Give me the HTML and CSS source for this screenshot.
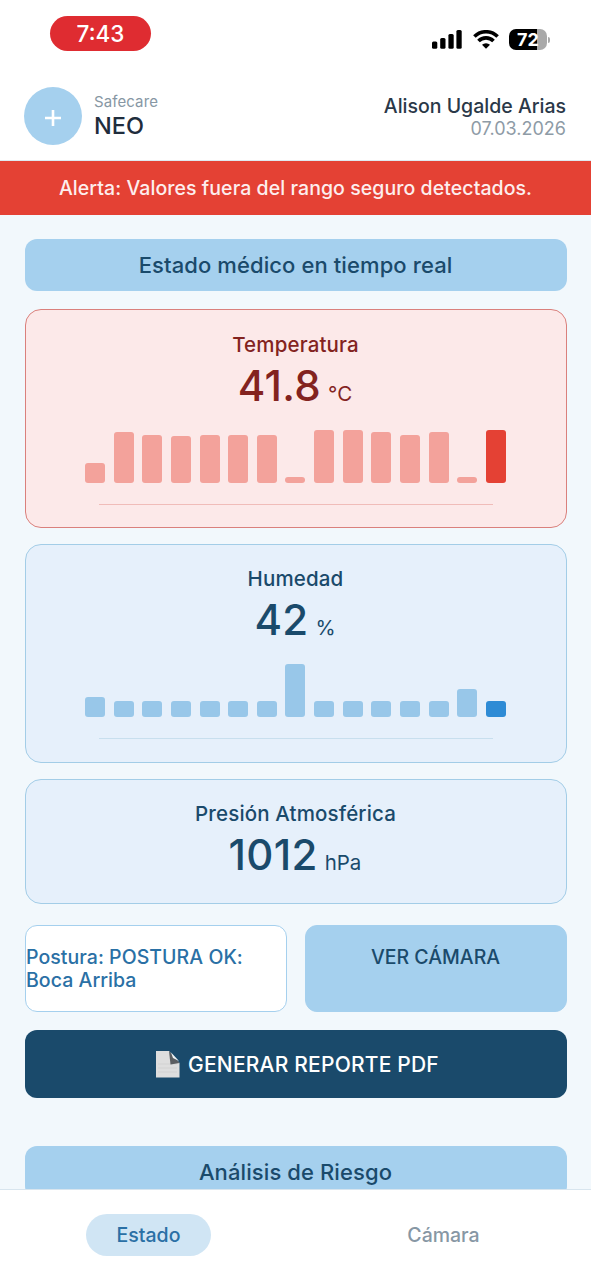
FILE: index.html
```html
<!DOCTYPE html>
<html lang="es">
<head>
    <meta charset="UTF-8">
    <meta name="viewport" content="width=device-width, initial-scale=1.0">
    <title>Safecare NEO</title>
    <link rel="stylesheet" href="styles.css">
</head>
<body>
    <div class="status-bar">
        <div class="clock">7:43</div>
        <div class="status-icons">
            <svg class="signal" width="30" height="19" viewBox="0 0 30 19">
                <rect x="0" y="11.5" width="5.3" height="7.2" rx="1.5"/>
                <rect x="8.2" y="8" width="5.3" height="10.7" rx="1.5"/>
                <rect x="16.4" y="4" width="5.3" height="14.7" rx="1.5"/>
                <rect x="24.4" y="0" width="5.3" height="18.7" rx="1.5"/>
            </svg>
            <svg class="wifi" width="26" height="19" viewBox="0 0 26 19">
                <path d="M1.4 6.5a16.5 16.5 0 0 1 23.2 0M5.5 11a10.5 10.5 0 0 1 15 0" fill="none" stroke="#000" stroke-width="3.6"/>
                <path d="M13 18.8l-4-4a5.7 5.7 0 0 1 8 0z"/>
            </svg>
            <div class="battery"><span>72</span></div>
        </div>
    </div>

    <header class="header">
        <div class="logo">
            <svg width="18" height="18" viewBox="0 0 18 18"><path d="M9 1v16M1 9h16" stroke="#fff" stroke-width="2.6"/></svg>
        </div>
        <div class="brand">
            <div class="brand-small">Safecare</div>
            <div class="brand-name">NEO</div>
        </div>
        <div class="patient">
            <div class="patient-name">Alison Ugalde Arias</div>
            <div class="patient-date">07.03.2026</div>
        </div>
    </header>

    <div class="alert">Alerta: Valores fuera del rango seguro detectados.</div>

    <main class="content">
        <h2 class="section-title">Estado médico en tiempo real</h2>

        <div class="card danger">
            <h3>Temperatura</h3>
            <div class="value"><span class="number">41.8</span><span class="unit">°C</span></div>
            <div class="chart">
                <i style="height:20px"></i>
                <i style="height:51px"></i>
                <i style="height:48px"></i>
                <i style="height:47px"></i>
                <i style="height:48px"></i>
                <i style="height:48px"></i>
                <i style="height:48px"></i>
                <i style="height:6px"></i>
                <i style="height:53.5px"></i>
                <i style="height:53.5px"></i>
                <i style="height:51px"></i>
                <i style="height:48px"></i>
                <i style="height:51px"></i>
                <i style="height:6px"></i>
                <i class="current" style="height:53.5px"></i>
            </div>
            <div class="axis"></div>
        </div>

        <div class="card">
            <h3>Humedad</h3>
            <div class="value"><span class="number">42</span><span class="unit">%</span></div>
            <div class="chart">
                <i style="height:20px"></i>
                <i style="height:16px"></i>
                <i style="height:16px"></i>
                <i style="height:16px"></i>
                <i style="height:16px"></i>
                <i style="height:16px"></i>
                <i style="height:16px"></i>
                <i style="height:53.5px"></i>
                <i style="height:16px"></i>
                <i style="height:16px"></i>
                <i style="height:16px"></i>
                <i style="height:16px"></i>
                <i style="height:16px"></i>
                <i style="height:28px"></i>
                <i class="current" style="height:16px"></i>
            </div>
            <div class="axis"></div>
        </div>

        <div class="card small">
            <h3>Presión Atmosférica</h3>
            <div class="value"><span class="number">1012</span><span class="unit">hPa</span></div>
        </div>

        <div class="actions">
            <div class="action posture">Postura: POSTURA OK: Boca Arriba</div>
            <div class="action camera">VER CÁMARA</div>
        </div>

        <div class="report">
            <svg width="24" height="27" viewBox="0 0 24 27">
                <path d="M0 0h13l10.500 12v14.500H0z" fill="#dedede"/>
                <path d="M2 13h19M2 17h19M2 21h19" stroke="#d2d2d2"/>
                <path d="M13 0l10.500 12-9 1.500z" fill="#5b5e61"/>
                <path d="M15 1.500l8 8.500-6-3z" fill="#f0f4f6"/>
            </svg>
            <span>GENERAR REPORTE PDF</span>
        </div>

        <h2 class="section-title risk">Análisis de Riesgo</h2>
    </main>

    <nav class="tabs">
        <div class="tab"><span class="active">Estado</span></div>
        <div class="tab"><span>Cámara</span></div>
    </nav>
</body>
</html>
```

FILE: styles.css
```css
* {
    margin: 0;
    padding: 0;
    box-sizing: border-box;
}

body {
    height: 1280px;
    display: flex;
    flex-direction: column;
    overflow: hidden;
    background: #f2f8fc;
    font-family: Inter, 'Liberation Sans', sans-serif;
    font-weight: 500;
    color: #1a4a6b;
}

.status-bar {
    height: 72px;
    flex: none;
    display: flex;
    justify-content: space-between;
    align-items: flex-start;
    padding: 16px 44px 0 50px;
    background: #fff;
}

.clock {
    width: 101px;
    height: 35px;
    border-radius: 18px;
    background: #df2c31;
    color: #fff;
    font-size: 22.5px;
    line-height: 36px;
    text-align: center;
}

.status-icons {
    display: flex;
    align-items: center;
    gap: 10.5px;
    padding-top: 13px;
}

.battery {
    position: relative;
    width: 38px;
    height: 21px;
    border-radius: 7px;
    background: linear-gradient(to right, #000 73%, #a9a9a9 73%);
    color: #fff;
    font-size: 18px;
    font-weight: 700;
    line-height: 21px;
    text-align: center;
}

.battery::after {
    content: '';
    position: absolute;
    right: -3px;
    top: 8px;
    width: 2px;
    height: 6px;
    border-radius: 0 2px 2px 0;
    background: #a9a9a9;
}

.header {
    height: 89px;
    flex: none;
    display: flex;
    align-items: flex-start;
    padding: 14.5px 25px 0 24px;
    background: #fff;
    border-bottom: 1px solid #dfe9f0;
}

.logo {
    width: 58px;
    height: 58px;
    display: flex;
    align-items: center;
    justify-content: center;
    padding-top: 4px;
    border-radius: 50%;
    background: #a5d0ee;
}

.brand {
    margin-left: 12px;
    padding-top: 5px;
}

.brand-small {
    font-size: 15px;
    font-weight: 400;
    line-height: 20px;
    letter-spacing: 0.1px;
    color: #8797a4;
}

.brand-name {
    font-size: 23.5px;
    line-height: 28px;
    color: #1f2d3d;
}

.patient {
    margin-left: auto;
    padding-top: 7px;
    text-align: right;
}

.patient-name {
    font-size: 19.5px;
    line-height: 24px;
    color: #2a3848;
}

.patient-date {
    font-size: 18px;
    font-weight: 400;
    line-height: 22px;
    color: #8e9ba6;
}

.alert {
    height: 54px;
    flex: none;
    background: #e44134;
    color: #fdeeee;
    font-size: 19.5px;
    letter-spacing: 0.07px;
    line-height: 55px;
    text-align: center;
}

.content {
    flex: 1;
    min-height: 0;
    overflow: hidden;
    padding: 24px 24.5px 0;
}

.section-title {
    height: 52px;
    border-radius: 12px;
    background: #a5d0ee;
    font-size: 22px;
    font-weight: 500;
    letter-spacing: 0.1px;
    line-height: 52px;
    text-align: center;
}

.card {
    height: 219px;
    margin-top: 16px;
    padding-top: 20px;
    border: 1.5px solid #a3cde7;
    border-radius: 16px;
    background: #e6f0fb;
    text-align: center;
}

.card.danger {
    margin-top: 18px;
    padding-top: 21px;
    border-color: #da807c;
    background: #fce9e9;
    color: #83231f;
}

.card.small {
    height: 125px;
}

.card h3 {
    font-size: 20.5px;
    font-weight: 500;
    letter-spacing: 0.15px;
    line-height: 28px;
}

.value {
    display: flex;
    justify-content: center;
    align-items: baseline;
    gap: 7px;
}

.number {
    font-size: 42px;
    letter-spacing: 0.3px;
    line-height: 54px;
}

.unit {
    margin-right: 1px;
    font-size: 20.5px;
    font-weight: 400;
}

.chart {
    width: 421px;
    height: 54px;
    margin: 16px auto 0;
    display: flex;
    justify-content: space-between;
    align-items: flex-end;
}

.chart i {
    width: 20px;
    border-radius: 3px;
    background: #98c7e9;
}

.chart .current {
    background: #2e8bd5;
}

.danger .chart i {
    background: #f3a29b;
}

.danger .chart .current {
    background: #e44134;
}

.axis {
    width: 394px;
    height: 1px;
    margin: 21px auto 0;
    background: #c8dfee;
}

.danger .axis {
    background: #f0bcb9;
}

.actions {
    display: grid;
    grid-template-columns: 1fr 1fr;
    gap: 18px;
    margin-top: 21px;
}

.action {
    height: 87px;
    padding-top: 20px;
    border: 1.5px solid #a5d0ee;
    border-radius: 12px;
    background: #a5d0ee;
    font-size: 19.5px;
    line-height: 23px;
    text-align: center;
}

.posture {
    padding-left: 0.5px;
    background: #fff;
    color: #2a70a5;
    letter-spacing: 0.05px;
    text-align: left;
}

.report {
    height: 68px;
    display: flex;
    align-items: center;
    justify-content: center;
    gap: 8px;
    margin-top: 18px;
    padding-left: 4px;
    border-radius: 12px;
    background: #1a4a6b;
    color: #fff;
    font-size: 21px;
    letter-spacing: 0.2px;
}

.risk {
    margin-top: 48px;
}

.tabs {
    height: 91px;
    flex: none;
    display: flex;
    padding: 24px 0 0 1px;
    background: #fff;
    border-top: 1px solid #d8e5ee;
}

.tab {
    flex: 1;
    text-align: center;
    color: #8797a4;
    font-size: 19.5px;
}

.tab span {
    display: inline-block;
    height: 42px;
    padding: 0 30.5px;
    border-radius: 21px;
    line-height: 43px;
}

.tab .active {
    background: #d0e5f4;
    color: #2a70a5;
}
```
